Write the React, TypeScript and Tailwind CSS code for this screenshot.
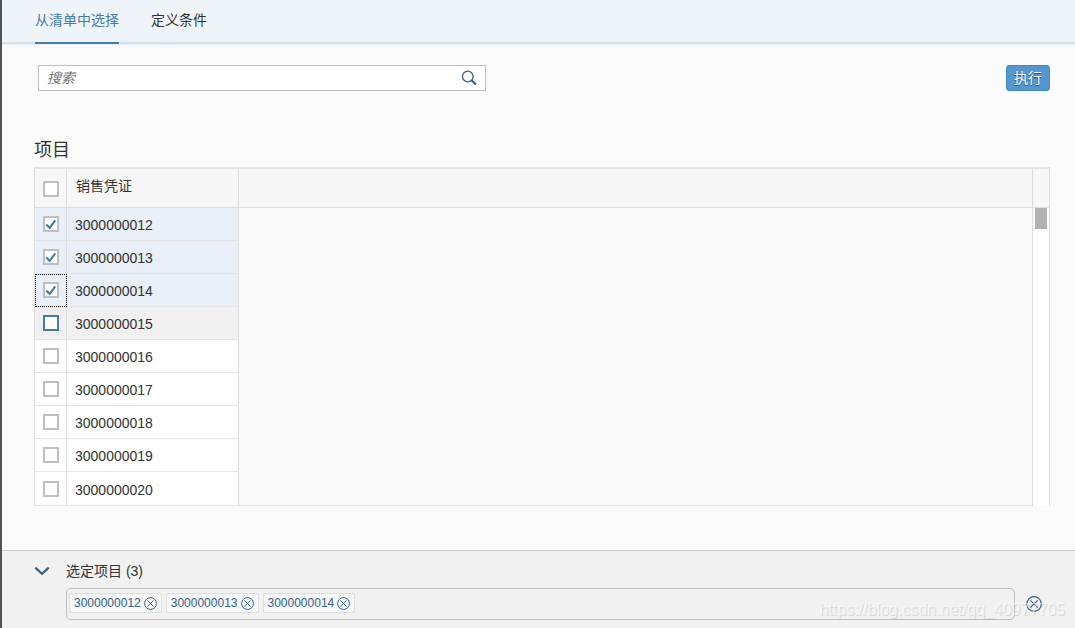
import { useState } from "react";
import clsx from "clsx";

const DOCS = [
  "3000000012",
  "3000000013",
  "3000000014",
  "3000000015",
  "3000000016",
  "3000000017",
  "3000000018",
  "3000000019",
  "3000000020",
];

const TABS = ["从清单中选择", "定义条件"];

type CheckProps = {
  label: string;
  checked: boolean;
  active?: boolean;
  onChange: () => void;
};

function Check({ label, checked, active, onChange }: CheckProps) {
  return (
    <label className="mx-auto grid size-4">
      <input
        type="checkbox"
        aria-label={label}
        checked={checked}
        onChange={onChange}
        className={clsx(
          "col-start-1 row-start-1 size-4 appearance-none rounded-none border-2 bg-white outline-none",
          active ? "border-[#427cac]" : "border-[#bfbfbf]"
        )}
      />
      {checked && (
        <svg
          viewBox="0 0 16 16"
          className="pointer-events-none col-start-1 row-start-1 size-4"
          fill="none"
          stroke="#427cac"
          strokeWidth="2.1"
        >
          <path d="M3.2 8.4 6.7 11.8 12.3 4.3" />
        </svg>
      )}
    </label>
  );
}

function CancelIcon({ className }: { className: string }) {
  return (
    <svg viewBox="0 0 16 16" className={className} fill="none" stroke="currentColor" strokeWidth="1.2">
      <circle cx="8" cy="8" r="7.3" />
      <path d="M4.3 4.3 11.7 11.7M11.7 4.3 4.3 11.7" />
    </svg>
  );
}

export default function App() {
  const [tab, setTab] = useState(0);
  const [query, setQuery] = useState("");
  const [open, setOpen] = useState(true);
  const [selected, setSelected] = useState<string[]>(DOCS.slice(0, 3));

  const toggle = (id: string) =>
    setSelected((s) => (s.includes(id) ? s.filter((x) => x !== id) : [...s, id].sort()));

  const allSelected = selected.length === DOCS.length;

  return (
    <div className="relative flex min-h-screen flex-col border-l-2 border-[#505153] bg-[#fafafa] font-['Liberation_Sans','Noto_Sans_CJK_SC',sans-serif] text-sm text-[#333]">
      <nav className="border-b border-[#eaf1f7] bg-[#eff4f9]">
        <div className="flex gap-8 border-b-2 border-[#cfe0ee] px-[33px]">
          {TABS.map((name, i) => (
            <button
              key={name}
              onClick={() => setTab(i)}
              className={clsx(
                "-mb-0.5 h-11 border-b-2 pb-0.5",
                tab === i ? "border-[#427cac] text-[#427cac]" : "border-transparent"
              )}
            >
              {name}
            </button>
          ))}
        </div>
      </nav>

      <main className="flex-1 pr-[25px] pb-11 pl-8">
        <div className="flex items-center justify-between gap-8 pt-5 pl-1">
          <form
            className="flex h-[26px] w-full max-w-[448px] items-center border border-[#bfbfbf] bg-white"
            onSubmit={(e) => e.preventDefault()}
          >
            <input
              type="text"
              aria-label="搜索"
              placeholder="搜索"
              value={query}
              onChange={(e) => setQuery(e.target.value)}
              className="min-w-0 flex-1 px-2 outline-none placeholder:text-[#757575] placeholder:italic"
            />
            <button aria-label="搜索" className="mr-2 text-[#346187]">
              <svg viewBox="0 0 16 16" className="size-4" fill="none" stroke="currentColor">
                <circle cx="6.8" cy="6.5" r="5.3" strokeWidth="1.3" />
                <path d="M10.5 10.2 15 14.5" strokeWidth="2.2" />
              </svg>
            </button>
          </form>
          <button className="h-[26px] shrink-0 rounded-[3px] border border-[#3f8acb] bg-[#5496cd] px-[7px] text-white text-shadow-[0_1px_1px_rgba(0,0,0,0.5)]">
            执行
          </button>
        </div>

        <h2 className="mt-[42px] text-lg leading-[34px]">项目</h2>

        <div className="flex border-x border-t-2 border-x-[#ddd] border-t-[#e5e5e5]">
          <table className="min-w-0 flex-1 table-fixed border-separate border-spacing-0 text-left">
            <colgroup>
              <col className="w-8" />
              <col className="w-[172px]" />
              <col />
            </colgroup>
            <thead>
              <tr className="h-[39px] bg-[#f7f7f7]">
                <th className="border-r border-b border-[#ddd] px-0 pt-0.5 pb-0">
                  <Check
                    label="全选"
                    checked={allSelected}
                    onChange={() => setSelected(allSelected ? [] : DOCS)}
                  />
                </th>
                <th className="border-r border-b border-[#ddd] px-[9px] pt-0 pb-1 font-normal">
                  销售凭证
                </th>
                <td className="border-b border-[#ddd] p-0" />
              </tr>
            </thead>
            <tbody>
              {DOCS.map((id, i) => {
                const on = selected.includes(id);
                const hovered = i === 3;
                return (
                  <tr
                    key={id}
                    className={clsx(
                      "h-[33px] last:h-[34px]",
                      on ? "bg-[#e8eff7]" : hovered ? "bg-[#f0f0f0]" : "bg-white"
                    )}
                  >
                    <td
                      className={clsx(
                        "border-r border-b border-r-[#ddd] border-b-[#e5e5e5] p-0",
                        i === 2 && "outline-1 -outline-offset-1 outline-black outline-dotted"
                      )}
                    >
                      <Check label={id} checked={on} active={hovered} onChange={() => toggle(id)} />
                    </td>
                    <td className="border-r border-b border-r-[#ddd] border-b-[#e5e5e5] px-2 pt-0.5 pb-0">
                      {id}
                    </td>
                    {i === 0 && (
                      <td rowSpan={DOCS.length} className="border-b border-[#e5e5e5] bg-[#f9f9f9] p-0" />
                    )}
                  </tr>
                );
              })}
            </tbody>
          </table>
          <div className="flex w-[17px] shrink-0 flex-col border-l border-[#ddd] bg-white">
            <div className="h-[39px] border-b border-[#ddd] bg-[#f7f7f7]" />
            <div className="mr-0.5 ml-0.5 h-[21px] bg-[#b2b2b2]" />
          </div>
        </div>
      </main>

      <footer className="border-t border-[#ccc] bg-[#f1f1f1] pt-2.5 pr-[33px] pb-2 pl-8">
        <div className="flex h-5 items-center gap-4">
          <button
            aria-label="选定项目"
            aria-expanded={open}
            onClick={() => setOpen(!open)}
            className="text-[#346187]"
          >
            <svg viewBox="0 0 16 16" className="size-4" fill="none" stroke="currentColor" strokeWidth="2.2">
              <path d="M1.3 4.6 8 10.7 14.7 4.6" />
            </svg>
          </button>
          <span>选定项目 ({selected.length})</span>
        </div>
        {open && (
          <div className="mt-[7px] flex items-center gap-[11px] pl-8">
            <ul className="flex h-8 min-w-0 flex-1 items-center gap-1 rounded-[5px] border border-[#bfbfbf] px-0.5 pb-0.5">
              {selected.map((id) => (
                <li
                  key={id}
                  className="flex h-5 items-center gap-[3px] rounded-xs border border-[#ddd] bg-[#f7f7f7] px-1 text-xs text-[#346187]"
                >
                  {id}
                  <button aria-label={`删除 ${id}`} onClick={() => toggle(id)}>
                    <CancelIcon className="size-[13px]" />
                  </button>
                </li>
              ))}
            </ul>
            <button aria-label="全部删除" onClick={() => setSelected([])} className="text-[#346187]">
              <CancelIcon className="size-4" />
            </button>
          </div>
        )}
      </footer>

      <div className="pointer-events-none absolute right-2.5 bottom-2 text-base leading-5 text-white/60 text-shadow-[1px_1px_1px_rgba(0,0,0,0.12)]">
        https://blog.csdn.net/qq_40977705
      </div>
    </div>
  );
}
